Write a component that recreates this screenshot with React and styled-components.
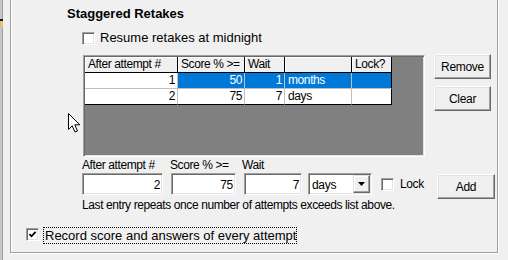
import React from "react";
import styled, { createGlobalStyle } from "styled-components";

const GlobalStyle = createGlobalStyle`
  html, body { margin: 0; padding: 0; background: #f0f0f0; }
  body {
    font-family: "Liberation Sans", Arial, sans-serif;
    font-size: 12px;
    color: #000;
  }
  #root { width: 508px; height: 260px; overflow: hidden; }
`;

const Page = styled.div`
  position: relative;
  display: flex;
  width: 508px;
  height: 260px;
  background: #f0f0f0;
`;

const EdgeStrip = styled.div`
  width: 3px;
  height: 100%;
  background: #c6c6c6;
  border-right: 1px solid #9c9c9c;
  display: flex;
  flex-direction: column;
  padding-top: 19px;
  box-sizing: border-box;
  flex: none;
`;

const EdgeMark = styled.div`
  width: 3px;
  height: ${(p) => p.$h}px;
  background: ${(p) => p.$c};
`;

const GroupBox = styled.div`
  margin-left: 7px;
  width: 488px;
  height: 253px;
  box-sizing: border-box;
  border: 1px solid #a0a0a0;
  border-top: none;
  box-shadow: inset 1px 0 0 #fff, 1px 1px 0 #fff;
  display: flex;
  flex-direction: column;
  flex: none;
`;

const Heading = styled.div`
  margin: 6px 0 0 56px;
  font-size: 13px;
  font-weight: bold;
  line-height: 16px;
  color: #000;
`;

const CheckRow = styled.div`
  display: flex;
  align-items: ${(p) => p.$align || "center"};
  margin: ${(p) => p.$margin};
  gap: ${(p) => p.$gap}px;
`;

const BigLabel = styled.span`
  font-size: 13px;
  line-height: ${(p) => p.$lh || 16}px;
`;

const FocusLabel = styled.span`
  font-size: 13px;
  line-height: 15px;
  border: 1px dotted #000;
  padding: 0 0 0 1px;
`;

const Box = styled.div`
  width: 13px;
  height: 13px;
  box-sizing: border-box;
  background: #fff;
  border: 1px solid;
  border-color: #a0a0a0 #fff #fff #a0a0a0;
  box-shadow: inset 1px 1px 0 #696969, inset -1px -1px 0 #e3e3e3;
  margin-top: ${(p) => p.$mt || 0}px;
  flex: none;
  display: flex;
  align-items: center;
  justify-content: center;
`;

const CheckBox = ({ checked, mt }) => (
  <Box $mt={mt}>
    {checked && (
      <svg width="9" height="9" viewBox="0 0 9 9">
        <path d="M1.5 4.2 L3.5 6.3 L7.6 1.8" stroke="#000" strokeWidth="1.8" fill="none" />
      </svg>
    )}
  </Box>
);

const MainRow = styled.div`
  display: flex;
  align-items: flex-start;
  gap: 9px;
  margin: 8px 0 0 72px;
`;

const Frame = styled.div`
  margin-top: 1px;
  width: 342px;
  height: 102px;
  box-sizing: border-box;
  border: 1px solid;
  border-color: #a0a0a0 #fff #fff #a0a0a0;
  box-shadow: inset 1px 1px 0 #696969, inset -1px -1px 0 #e3e3e3;
  padding: 1px 0 0 1px;
  background: #808080;
`;

const Grid = styled.div`
  display: grid;
  grid-template-columns: 93px 67px 40px 67px 40px;
  grid-auto-rows: 16px;
  width: 307px;
`;

const Cell = styled.div`
  box-sizing: border-box;
  border-right: 1px solid ${(p) => (p.$head || p.$lastCol ? "#000" : "#c0c0c0")};
  border-bottom: 1px solid ${(p) => (p.$head || p.$lastRow ? "#000" : "#c0c0c0")};
  background: ${(p) => (p.$head ? "#f0f0f0" : p.$sel ? "#0078d7" : "#fff")};
  color: ${(p) => (p.$sel ? "#fff" : "#000")};
  box-shadow: ${(p) => (p.$head ? "inset 1px 1px 0 #fff" : "none")};
  text-align: ${(p) => p.$align || "left"};
  padding: ${(p) => (p.$align === "right" ? "0 2px 0 2px" : "0 2px 0 3px")};
  line-height: 15px;
  font-size: 12px;
  letter-spacing: -0.4px;
  white-space: nowrap;
  overflow: hidden;
`;

const ButtonCol = styled.div`
  display: flex;
  flex-direction: column;
  gap: 7px;
`;

const Button = styled.div`
  width: ${(p) => p.$w}px;
  height: 25px;
  box-sizing: border-box;
  background: #f0f0f0;
  border: 1px solid;
  border-color: #fff #696969 #696969 #fff;
  box-shadow: inset -1px -1px 0 #a0a0a0, inset 1px 1px 0 #e3e3e3;
  display: flex;
  align-items: center;
  justify-content: center;
  font-size: 12px;
  letter-spacing: -0.3px;
  margin-top: ${(p) => p.$mt || 0}px;
  flex: none;
`;

const Fields = styled.div`
  display: flex;
  flex-direction: column;
  margin: 1px 0 0 71px;
`;

const LabelRow = styled.div`
  display: flex;
  height: 15px;
`;

const SmallLabel = styled.span`
  width: ${(p) => (p.$w ? `${p.$w}px` : "auto")};
  line-height: 15px;
  font-size: 12px;
  letter-spacing: -0.4px;
  white-space: nowrap;
`;

const ControlRow = styled.div`
  display: flex;
  align-items: flex-start;
`;

const TextBox = styled.div`
  width: ${(p) => p.$w}px;
  height: 22px;
  box-sizing: border-box;
  margin-right: ${(p) => p.$mr}px;
  background: #fff;
  border: 1px solid;
  border-color: #a0a0a0 #fff #fff #a0a0a0;
  box-shadow: inset 1px 1px 0 #696969, inset -1px -1px 0 #e3e3e3;
  text-align: right;
  padding: 2px 2px 0 2px;
  line-height: 18px;
  font-size: 12px;
  letter-spacing: -0.3px;
  flex: none;
`;

const SelectBox = styled.div`
  width: 64px;
  height: 22px;
  box-sizing: border-box;
  margin-right: 9px;
  background: #fff;
  border: 1px solid;
  border-color: #a0a0a0 #fff #fff #a0a0a0;
  box-shadow: inset 1px 1px 0 #696969, inset -1px -1px 0 #e3e3e3;
  padding: 1px 1px 1px 3px;
  display: flex;
  align-items: stretch;
  flex: none;
`;

const SelectText = styled.span`
  flex: 1;
  line-height: 18px;
  padding-top: 1px;
  font-size: 12px;
  letter-spacing: -0.3px;
`;

const DropButton = styled.div`
  width: 17px;
  box-sizing: border-box;
  background: #f0f0f0;
  border: 1px solid;
  border-color: #e3e3e3 #696969 #696969 #e3e3e3;
  box-shadow: inset -1px -1px 0 #a0a0a0, inset 1px 1px 0 #fff;
  display: flex;
  align-items: center;
  justify-content: center;
`;

const LockGroup = styled.div`
  display: flex;
  align-items: center;
  height: 22px;
  gap: 6px;
  width: 56px;
  flex: none;
`;

const Helper = styled.div`
  line-height: 13px;
  font-size: 12px;
  letter-spacing: -0.4px;
  white-space: nowrap;
`;

const CursorLayer = styled.svg`
  position: absolute;
  left: 67px;
  top: 112px;
`;

export default function App() {
  const rows = [
    ["1", "50", "1", "months", ""],
    ["2", "75", "7", "days", ""],
  ];
  const heads = ["After attempt #", "Score % >=", "Wait", "", "Lock?"];
  const aligns = ["right", "right", "right", "left", "left"];

  return (
    <>
      <GlobalStyle />
      <Page>
        <EdgeStrip>
          <EdgeMark $h={2} $c="#1a1a1a" />
          <EdgeMark $h={7} $c="#d8c47a" />
        </EdgeStrip>
        <GroupBox>
          <Heading>Staggered Retakes</Heading>
          <CheckRow $margin="8px 0 0 71px" $gap={5}>
            <CheckBox />
            <BigLabel>Resume retakes at midnight</BigLabel>
          </CheckRow>
          <MainRow>
            <Frame>
              <Grid>
                {heads.map((h, i) => (
                  <Cell key={"h" + i} $head>
                    {h}
                  </Cell>
                ))}
                {rows.map((r, ri) =>
                  r.map((v, ci) => (
                    <Cell
                      key={ri + "-" + ci}
                      $align={aligns[ci]}
                      $sel={ri === 0 && ci > 0}
                      $lastCol={ci === 4}
                      $lastRow={ri === rows.length - 1}
                    >
                      {v}
                    </Cell>
                  ))
                )}
              </Grid>
            </Frame>
            <ButtonCol>
              <Button $w={57}>Remove</Button>
              <Button $w={57}>Clear</Button>
            </ButtonCol>
          </MainRow>
          <Fields>
            <LabelRow>
              <SmallLabel $w={88}>After attempt #</SmallLabel>
              <SmallLabel $w={72}>Score % &gt;=</SmallLabel>
              <SmallLabel>Wait</SmallLabel>
            </LabelRow>
            <ControlRow>
              <TextBox $w={81} $mr={8}>2</TextBox>
              <TextBox $w={65} $mr={8}>75</TextBox>
              <TextBox $w={58} $mr={6}>7</TextBox>
              <SelectBox>
                <SelectText>days</SelectText>
                <DropButton>
                  <svg width="7" height="4" viewBox="0 0 7 4">
                    <path d="M0 0 H7 L3.5 4 Z" fill="#000" />
                  </svg>
                </DropButton>
              </SelectBox>
              <LockGroup>
                <CheckBox />
                <SmallLabel>Lock</SmallLabel>
              </LockGroup>
              <Button $w={58} $mt={1}>Add</Button>
            </ControlRow>
            <Helper>Last entry repeats once number of attempts exceeds list above.</Helper>
          </Fields>
          <CheckRow $margin="15px 0 0 15px" $gap={4} $align="flex-start">
            <CheckBox checked mt={1} />
            <FocusLabel>Record score and answers of every attempt</FocusLabel>
          </CheckRow>
        </GroupBox>
        <CursorLayer width="14" height="22" viewBox="0 0 14 22">
          <path
            d="M1.5 1.5 L1.5 17.5 L5.2 13.8 L8 20 L10.5 19 L7.8 12.8 L12.8 12.8 Z"
            fill="#fff"
            stroke="#000"
            strokeWidth="1"
            strokeLinejoin="miter"
          />
        </CursorLayer>
      </Page>
    </>
  );
}
